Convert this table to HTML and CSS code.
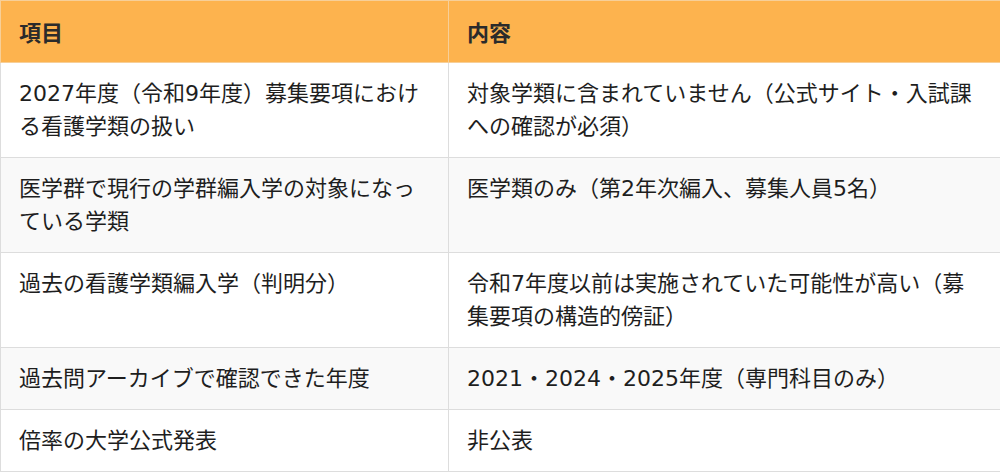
FILE: index.html
```html
<!DOCTYPE html>
<html lang="ja">
<head>
<meta charset="utf-8">
<link rel="stylesheet" href="styles.css">
</head>
<body>
<table class="info">
  <colgroup><col class="c1"><col class="c2"></colgroup>
  <thead>
    <tr><th>項目</th><th>内容</th></tr>
  </thead>
  <tbody>
    <tr><td>2027年度（令和9年度）募集要項における看護学類の扱い</td><td>対象学類に含まれていません（公式サイト・入試課への確認が必須）</td></tr>
    <tr class="alt"><td>医学群で現行の学群編入学の対象になっている学類</td><td>医学類のみ（第2年次編入、募集人員5名）</td></tr>
    <tr><td>過去の看護学類編入学（判明分）</td><td>令和7年度以前は実施されていた可能性が高い（募集要項の構造的傍証）</td></tr>
    <tr class="alt"><td>過去問アーカイブで確認できた年度</td><td>2021・2024・2025年度（専門科目のみ）</td></tr>
    <tr><td>倍率の大学公式発表</td><td>非公表</td></tr>
  </tbody>
</table>
</body>
</html>
```
FILE: styles.css
```css
html, body {
  margin: 0;
  padding: 0;
  background: #ffffff;
}
.info {
  width: 1000px;
  border-collapse: collapse;
  table-layout: fixed;
  font-family: "DejaVu Sans", "Noto Sans CJK JP", sans-serif;
  font-size: 22px;
  line-height: 33px;
  color: #1e1e1e;
}
.c1 { width: 448px; }
.c2 { width: 552px; }
.info th,
.info td {
  text-align: left;
  vertical-align: top;
  padding: 14px 18px 14px 18px;
  border: 1px solid #dddddd;
}
.info th {
  background: #fdb34e;
  color: #2b2b2b;
  font-weight: 700;
  font-family: "Noto Sans CJK JP", sans-serif;
  border-color: #f7cf98;
}
.info tr.alt td {
  background: #f9f9f9;
}
```
